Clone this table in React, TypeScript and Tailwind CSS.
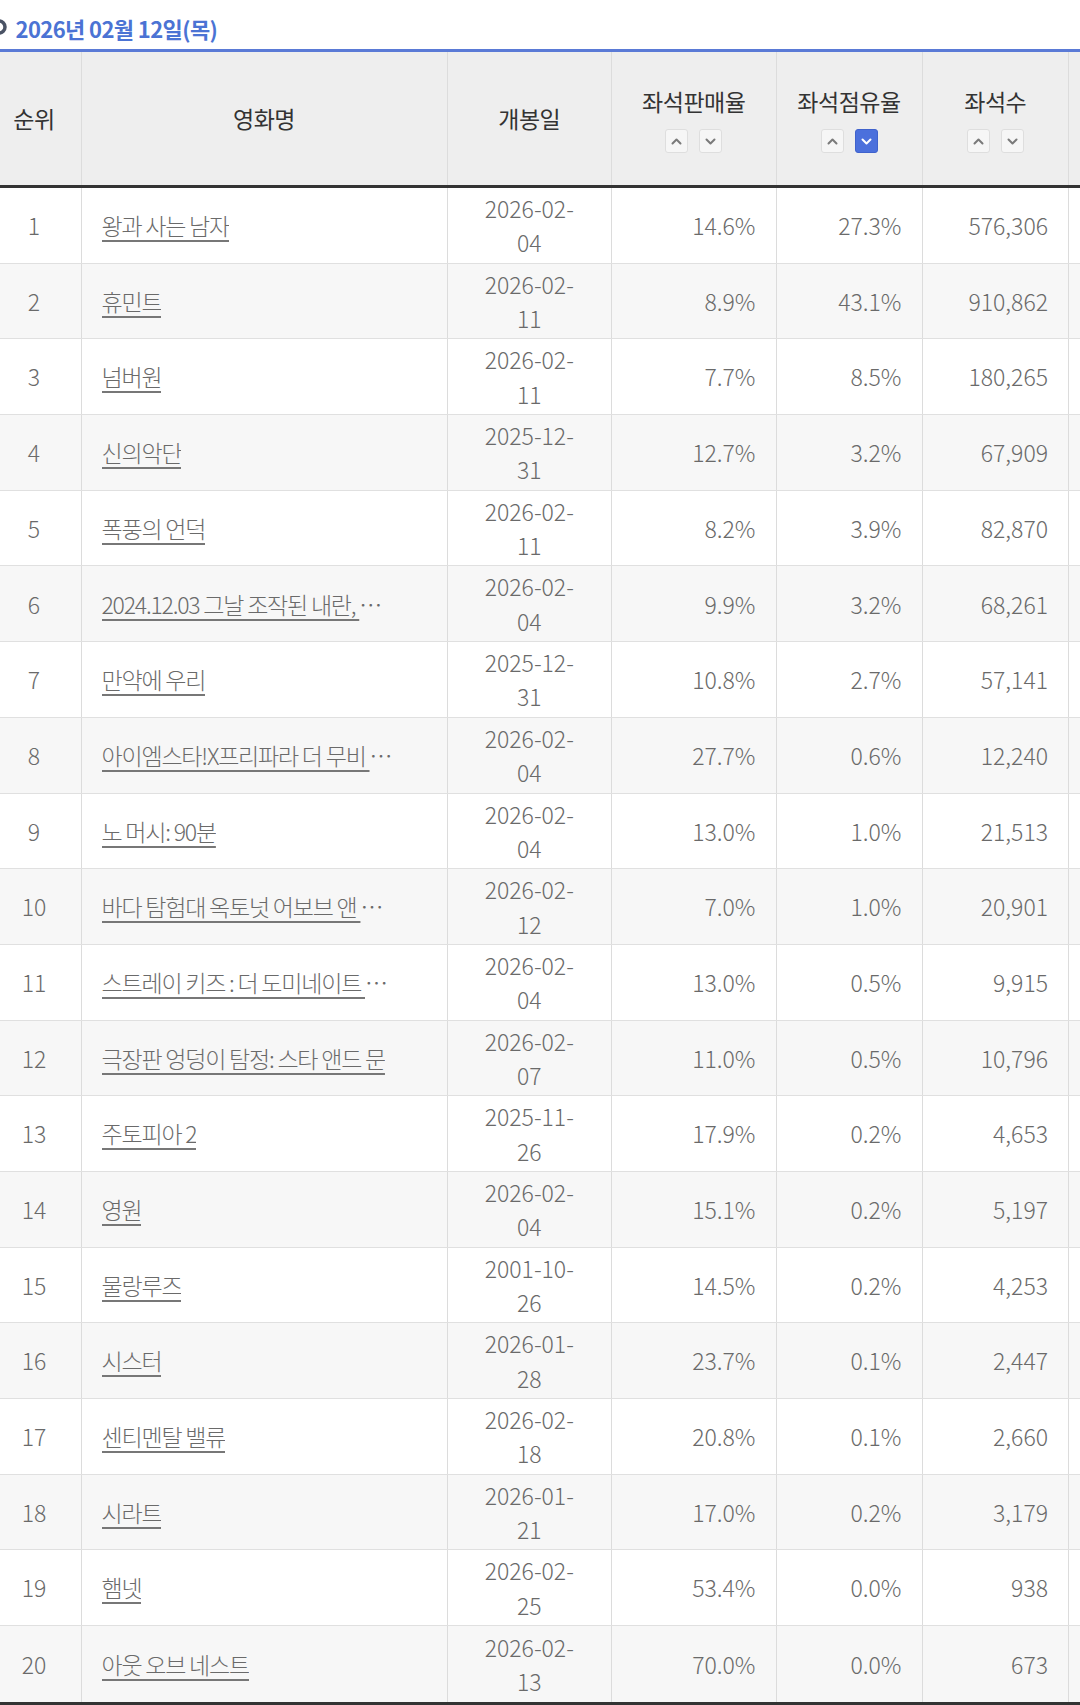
import React from "react";

type Row = [number, string, string, string, string, string, string];

const rows: Row[] = [
  [1, "왕과 사는 남자", "2026-02-", "04", "14.6%", "27.3%", "576,306"],
  [2, "휴민트", "2026-02-", "11", "8.9%", "43.1%", "910,862"],
  [3, "넘버원", "2026-02-", "11", "7.7%", "8.5%", "180,265"],
  [4, "신의악단", "2025-12-", "31", "12.7%", "3.2%", "67,909"],
  [5, "폭풍의 언덕", "2026-02-", "11", "8.2%", "3.9%", "82,870"],
  [6, "2024.12.03 그날 조작된 내란, 그리고 그날의 기록", "2026-02-", "04", "9.9%", "3.2%", "68,261"],
  [7, "만약에 우리", "2025-12-", "31", "10.8%", "2.7%", "57,141"],
  [8, "아이엠스타!X프리파라 더 무비 - 만남의 기적!", "2026-02-", "04", "27.7%", "0.6%", "12,240"],
  [9, "노 머시: 90분", "2026-02-", "04", "13.0%", "1.0%", "21,513"],
  [10, "바다 탐험대 옥토넛 어보브 앤 비욘드: 극장판", "2026-02-", "12", "7.0%", "1.0%", "20,901"],
  [11, "스트레이 키즈 : 더 도미네이트 익스피리언스", "2026-02-", "04", "13.0%", "0.5%", "9,915"],
  [12, "극장판 엉덩이 탐정: 스타 앤드 문", "2026-02-", "07", "11.0%", "0.5%", "10,796"],
  [13, "주토피아 2", "2025-11-", "26", "17.9%", "0.2%", "4,653"],
  [14, "영원", "2026-02-", "04", "15.1%", "0.2%", "5,197"],
  [15, "물랑루즈", "2001-10-", "26", "14.5%", "0.2%", "4,253"],
  [16, "시스터", "2026-01-", "28", "23.7%", "0.1%", "2,447"],
  [17, "센티멘탈 밸류", "2026-02-", "18", "20.8%", "0.1%", "2,660"],
  [18, "시라트", "2026-01-", "21", "17.0%", "0.2%", "3,179"],
  [19, "햄넷", "2026-02-", "25", "53.4%", "0.0%", "938"],
  [20, "아웃 오브 네스트", "2026-02-", "13", "70.0%", "0.0%", "673"],
];

const cols = "grid grid-cols-[94px_366px_164.5px_164.5px_146px_146.5px_100px]";

function SortButton({ dir, active }: { dir: "up" | "down"; active?: boolean }) {
  return (
    <span
      className={`flex h-[24px] w-[23px] items-center justify-center rounded-[3px] border ${
        active ? "border-[#3f62cc] bg-[#4b70dc]" : "border-[#dedede] bg-[#f6f6f6]"
      }`}
    >
      <svg width="11" height="7" viewBox="0 0 11 7" fill="none">
        <polyline
          points={dir === "up" ? "1.5,5.5 5.5,1.5 9.5,5.5" : "1.5,1.5 5.5,5.5 9.5,1.5"}
          stroke={active ? "#ffffff" : "#7a7a7a"}
          strokeWidth="2"
          strokeLinecap="round"
          strokeLinejoin="round"
        />
      </svg>
    </span>
  );
}

function SortHeader({ label, active }: { label: string; active?: boolean }) {
  return (
    <div className="flex flex-col items-center justify-center border-r border-[#dcdcdc]">
      <span className="leading-[34px] tracking-[-0.5px]">{label}</span>
      <div className="mt-[11px] flex gap-[11px]">
        <SortButton dir="up" />
        <SortButton dir="down" active={active} />
      </div>
    </div>
  );
}

export default function App() {
  return (
    <div
      className="w-[1080px] h-[1705px] overflow-hidden bg-white"
      style={{ fontFamily: '"Noto Sans CJK KR", "Noto Sans", sans-serif' }}
    >
      <div className="ml-[-12.5px] w-[1181.5px]">
        <div className="flex h-[49px] items-start pl-[3px] pt-[13px]">
          <svg width="16" height="16" viewBox="0 0 16 16" className="mt-[6px] mr-[9px]">
            <circle cx="8" cy="8" r="6" fill="none" stroke="#4a5365" strokeWidth="3.5" />
          </svg>
          <span className="text-[22px] font-bold leading-[30px] tracking-[-0.6px] text-[#4b73d4]">
            2026년 02월 12일(목)
          </span>
        </div>

        <div className="border-t-[3px] border-[#5a7ad6] border-b-[3px] border-b-[#333333]">
          <div className={`${cols} h-[133px] bg-[#eeeeee] text-[23px] text-[#333333]`}>
            <div className="flex items-center justify-center border-r border-[#dcdcdc] tracking-[-0.5px]">순위</div>
            <div className="flex items-center justify-center border-r border-[#dcdcdc] tracking-[-0.5px]">영화명</div>
            <div className="flex items-center justify-center border-r border-[#dcdcdc] tracking-[-0.5px]">개봉일</div>
            <SortHeader label="좌석판매율" />
            <SortHeader label="좌석점유율" active />
            <SortHeader label="좌석수" />
            <div />
          </div>
        </div>

        <div className="text-[23px] font-light text-[#6a6a6a]">
          {rows.map(([rank, name, d1, d2, sales, share, seats], i) => (
            <div
              key={rank}
              className={`${cols} h-[75.7px] ${i < rows.length - 1 ? "border-b border-[#e0e0e0]" : ""} ${
                i % 2 === 1 ? "bg-[#f7f7f7]" : "bg-white"
              }`}
            >
              <div className="flex items-center justify-center border-r border-[#dcdcdc]">{rank}</div>
              <div className="flex min-w-0 items-center border-r border-[#dcdcdc] pl-[20px] pr-[52px]">
                <div className="truncate">
                  <a className="tracking-[-1.2px] underline decoration-[#777777] underline-offset-[5px]">{name}</a>
                </div>
              </div>
              <div className="flex items-center justify-center border-r border-[#dcdcdc] text-center leading-[34.35px]">
                <span>
                  {d1}
                  <br />
                  {d2}
                </span>
              </div>
              <div className="flex items-center justify-end border-r border-[#dcdcdc] pr-[20px]">{sales}</div>
              <div className="flex items-center justify-end border-r border-[#dcdcdc] pr-[20px]">{share}</div>
              <div className="flex items-center justify-end border-r border-[#dcdcdc] pr-[20px]">{seats}</div>
              <div />
            </div>
          ))}
        </div>
        <div className="h-[3px] bg-[#333333]" />
      </div>
    </div>
  );
}
